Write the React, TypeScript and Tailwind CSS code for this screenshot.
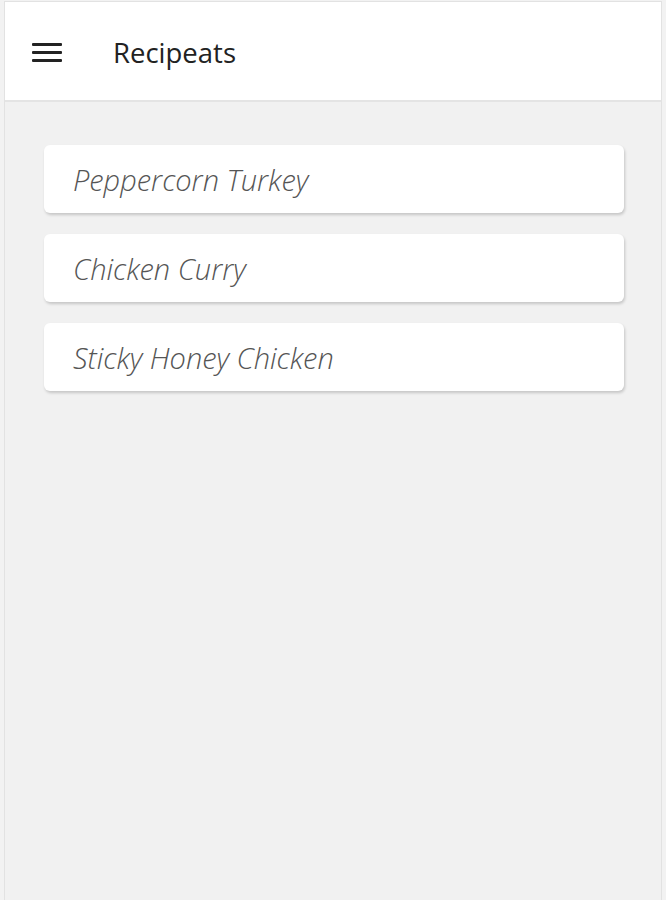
import React from 'react';

const recipes = ['Peppercorn Turkey', 'Chicken Curry', 'Sticky Honey Chicken'];

const MenuIcon = () => (
  <svg width="30" height="20" viewBox="0 0 30 20" className="block">
    <rect x="0" y="0" width="30" height="3" rx="1" fill="#222" />
    <rect x="0" y="8" width="30" height="3" rx="1" fill="#222" />
    <rect x="0" y="16" width="30" height="3" rx="1" fill="#222" />
  </svg>
);

const App = () => {
  return (
    <div className="h-[900px] w-full bg-[#f2f2f2] px-[4px] pt-[1px] font-['Open_Sans','Liberation_Sans',sans-serif]">
      <div className="flex h-full flex-col border-x border-t border-[#e2e2e2] bg-[#f1f1f1]">
        {/* header */}
        <div className="flex h-[100px] shrink-0 items-center border-b-2 border-[#e4e4e4] bg-white">
          <div className="ml-[27px] mt-[4px]">
            <MenuIcon />
          </div>
          <h1 className="ml-[51px] mt-[4px] text-[27.5px] font-normal leading-none text-[#222]">Recipeats</h1>
        </div>

        {/* list */}
        <div className="flex flex-col gap-[21px] pl-[39px] pr-[37px] pt-[43px]">
          {recipes.map((r) => (
            <div
              key={r}
              className="flex h-[68px] items-center rounded-[6px] bg-white pl-[29px] shadow-[1px_2px_3px_rgba(0,0,0,0.18)]"
            >
              <span className="text-[29px] font-light italic leading-none text-[#555]">{r}</span>
            </div>
          ))}
        </div>
      </div>
    </div>
  );
};

export default App;
